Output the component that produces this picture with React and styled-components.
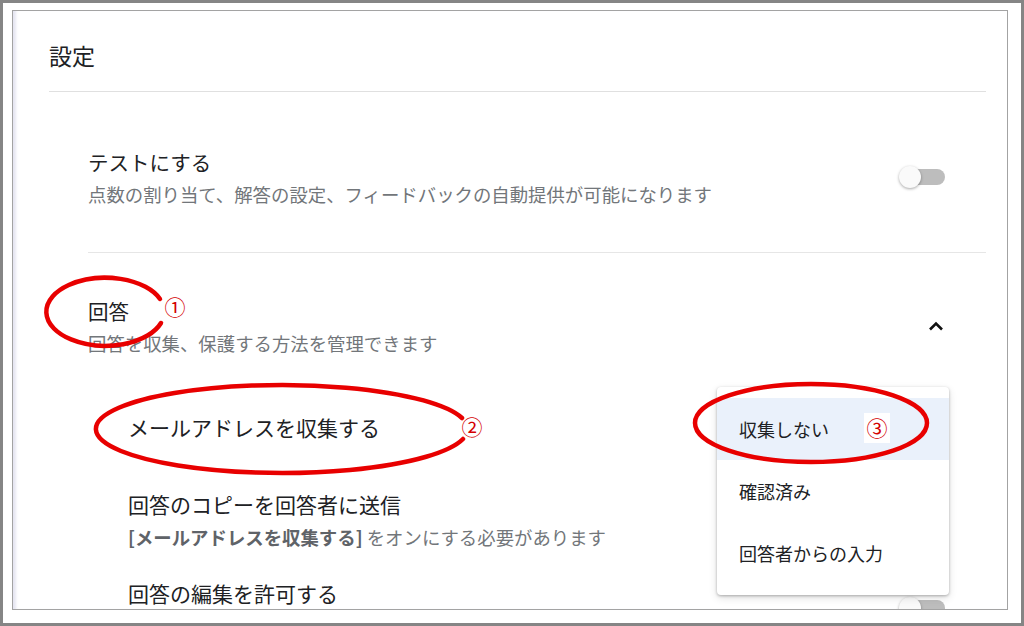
import React from 'react';
import styled, { createGlobalStyle } from 'styled-components';

const GlobalStyle = createGlobalStyle`
  html, body {
    margin: 0;
    padding: 0;
    background: #ffffff;
  }
  body {
    font-family: "Noto Sans CJK JP", "Noto Sans", sans-serif;
    color: #202124;
  }
  * {
    box-sizing: border-box;
  }
`

const Frame = styled.div`
  position: relative;
  width: 1024px;
  height: 626px;
  border: 3px solid #858585;
  background: #ffffff;
  padding: 7px 13px 13px 9px;
`

const Panel = styled.div`
  position: relative;
  height: 600px;
  border: 1px solid #a3a3a3;
  overflow: hidden;
  padding: 0 21px 0 36px;
  box-shadow: inset 5px 0 3px -2px #e6e6f2;
`

const Header = styled.div`
  font-size: 23px;
  line-height: 32px;
  padding: 28px 0 20px;
  border-bottom: 1px solid #e0e0e0;
`

const Section = styled.div`
  margin-left: 39px;
  padding: ${p => p.$top}px 0 ${p => p.$bottom}px;
  border-bottom: ${p => (p.$divider ? '1px solid #e6e6e6' : 'none')};
`

const SettingRow = styled.div`
  display: flex;
  align-items: center;
  justify-content: space-between;
  padding-right: ${p => p.$right ?? 41}px;
  min-height: ${p => p.$minHeight || 0}px;
`

const TextBlock = styled.div`
  display: flex;
  flex-direction: column;
`

const Title = styled.div`
  font-size: ${p => p.$size || 20.5}px;
  line-height: 30px;
  color: #202124;
`

const Sub = styled.div`
  font-size: 18.4px;
  line-height: 26px;
  margin-top: ${p => p.$gap || 4}px;
  color: #72767a;

  b {
    font-weight: 700;
    color: #5f6368;
  }
`

const SubItems = styled.div`
  margin-left: 40px;
  display: flex;
  flex-direction: column;
`

const SubItem = styled.div`
  margin-top: ${p => p.$gap}px;
`

const Switch = styled.div`
  position: relative;
  width: 47px;
  height: 24px;
  flex-shrink: 0;

  &::before {
    content: '';
    position: absolute;
    right: 0;
    top: 4px;
    width: 41px;
    height: 16px;
    border-radius: 8px;
    background: #bdbdbd;
  }
`

const Thumb = styled.span`
  position: absolute;
  left: 1px;
  top: 1px;
  width: 22px;
  height: 22px;
  border-radius: 50%;
  background: #fafafa;
  box-shadow: 0 1px 3px rgba(0, 0, 0, 0.35);
`

const Chevron = styled.svg`
  width: 16px;
  height: 12px;
  flex-shrink: 0;
  margin-right: 1px;
`

const Menu = styled.div`
  position: absolute;
  left: 704px;
  top: 376px;
  width: 232px;
  padding: 11px 0;
  background: #ffffff;
  border-radius: 4px;
  box-shadow: 0 1px 3px rgba(0, 0, 0, 0.28), 0 3px 8px rgba(0, 0, 0, 0.12);
  z-index: 2;
`

const MenuItem = styled.div`
  height: 62px;
  display: flex;
  align-items: center;
  padding-left: 22px;
  font-size: 18px;
  color: #202124;
  background: ${p => (p.$active ? '#eaf1fb' : 'transparent')};
`

const Marks = styled.svg`
  position: absolute;
  left: -3px;
  top: -3px;
  width: 1024px;
  height: 626px;
  pointer-events: none;
  z-index: 5;
`

const MarkNumber = styled.text`
  font-family: "Noto Sans CJK JP", sans-serif;
  font-size: 21px;
  fill: #d40000;
`

function Toggle() {
  return (
    <Switch>
      <Thumb />
    </Switch>
  );
}

export default function App() {
  return (
    <>
      <GlobalStyle />
      <Frame>
        <Panel>
          <Header>設定</Header>

          <Section $top={55} $bottom={45} $divider>
            <SettingRow>
              <TextBlock>
                <Title>テストにする</Title>
                <Sub>点数の割り当て、解答の設定、フィードバックの自動提供が可能になります</Sub>
              </TextBlock>
              <Toggle />
            </SettingRow>
          </Section>

          <Section $top={43} $bottom={0}>
            <SettingRow>
              <TextBlock>
                <Title>回答</Title>
                <Sub>回答を収集、保護する方法を管理できます</Sub>
              </TextBlock>
              <Chevron viewBox="0 0 16 12">
                <polyline points="2,9.5 8,3.5 14,9.5" fill="none" stroke="#111" strokeWidth="2.6" />
              </Chevron>
            </SettingRow>

            <SubItems>
              <SubItem $gap={56}>
                <Title $size={21}>メールアドレスを収集する</Title>
              </SubItem>
              <SubItem $gap={47}>
                <Title $size={21}>回答のコピーを回答者に送信</Title>
                <Sub $gap={5}>
                  <b>[メールアドレスを収集する]</b> をオンにする必要があります
                </Sub>
              </SubItem>
              <SubItem $gap={27}>
                <SettingRow $minHeight={62} $right={41}>
                  <TextBlock>
                    <Title $size={21}>回答の編集を許可する</Title>
                    <Sub>&nbsp;</Sub>
                  </TextBlock>
                  <Toggle />
                </SettingRow>
              </SubItem>
            </SubItems>
          </Section>

          <Menu>
            <MenuItem $active>収集しない</MenuItem>
            <MenuItem>確認済み</MenuItem>
            <MenuItem>回答者からの入力</MenuItem>
          </Menu>
        </Panel>

        <Marks viewBox="0 0 1024 626">
          <path d="M160 299 A59 34 0 1 0 161 323" fill="none" stroke="#e80000" strokeWidth="4.5" strokeLinecap="round" />
          <MarkNumber x="175" y="315" textAnchor="middle">①</MarkNumber>
          <path d="M462 418 A186 44 0 1 0 463 439" fill="none" stroke="#e80000" strokeWidth="4.5" strokeLinecap="round" />
          <MarkNumber x="472" y="435" textAnchor="middle">②</MarkNumber>
          <ellipse cx="811" cy="423" rx="116" ry="39" fill="none" stroke="#e80000" strokeWidth="4.5" />
          <rect x="864" y="413" width="26" height="30" fill="#ffffff" />
          <MarkNumber x="877" y="436" textAnchor="middle">③</MarkNumber>
        </Marks>
      </Frame>
    </>
  );
}
